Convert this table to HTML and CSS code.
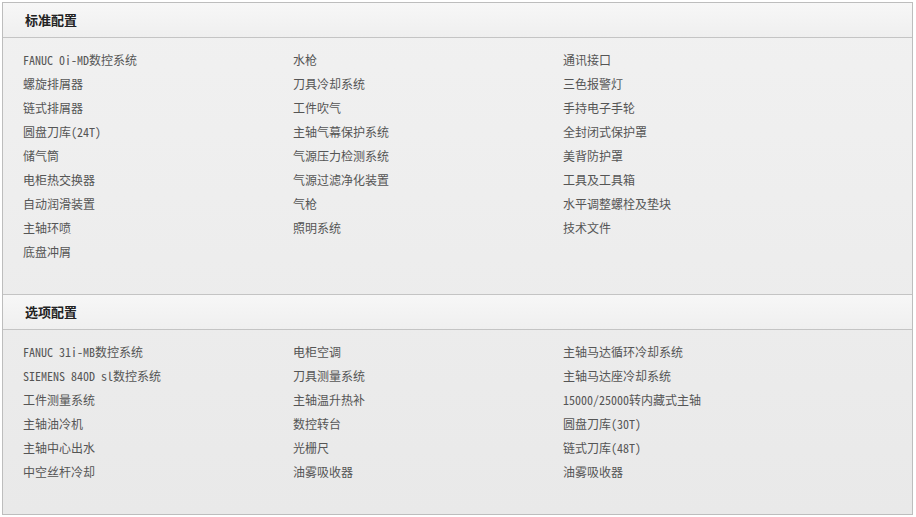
FILE: index.html
```html
<!DOCTYPE html>
<html lang="zh-CN">
<head>
<meta charset="utf-8">
<title>配置</title>
<link rel="stylesheet" href="styles.css">
</head>
<body>
<div class="box">
  <section class="sec">
    <div class="head">标准配置</div>
    <div class="grid">
      <div class="col">
        <div class="item">FANUC 0i-MD数控系统</div>
        <div class="item">螺旋排屑器</div>
        <div class="item">链式排屑器</div>
        <div class="item">圆盘刀库(24T)</div>
        <div class="item">储气筒</div>
        <div class="item">电柜热交换器</div>
        <div class="item">自动润滑装置</div>
        <div class="item">主轴环喷</div>
        <div class="item">底盘冲屑</div>
      </div>
      <div class="col">
        <div class="item">水枪</div>
        <div class="item">刀具冷却系统</div>
        <div class="item">工件吹气</div>
        <div class="item">主轴气幕保护系统</div>
        <div class="item">气源压力检测系统</div>
        <div class="item">气源过滤净化装置</div>
        <div class="item">气枪</div>
        <div class="item">照明系统</div>
      </div>
      <div class="col">
        <div class="item">通讯接口</div>
        <div class="item">三色报警灯</div>
        <div class="item">手持电子手轮</div>
        <div class="item">全封闭式保护罩</div>
        <div class="item">美背防护罩</div>
        <div class="item">工具及工具箱</div>
        <div class="item">水平调整螺栓及垫块</div>
        <div class="item">技术文件</div>
      </div>
    </div>
  </section>
  <section class="sec">
    <div class="head">选项配置</div>
    <div class="grid">
      <div class="col">
        <div class="item">FANUC 31i-MB数控系统</div>
        <div class="item">SIEMENS 840D sl数控系统</div>
        <div class="item">工件测量系统</div>
        <div class="item">主轴油冷机</div>
        <div class="item">主轴中心出水</div>
        <div class="item">中空丝杆冷却</div>
      </div>
      <div class="col">
        <div class="item">电柜空调</div>
        <div class="item">刀具测量系统</div>
        <div class="item">主轴温升热补</div>
        <div class="item">数控转台</div>
        <div class="item">光栅尺</div>
        <div class="item">油雾吸收器</div>
      </div>
      <div class="col">
        <div class="item">主轴马达循环冷却系统</div>
        <div class="item">主轴马达座冷却系统</div>
        <div class="item">15000/25000转内藏式主轴</div>
        <div class="item">圆盘刀库(30T)</div>
        <div class="item">链式刀库(48T)</div>
        <div class="item">油雾吸收器</div>
      </div>
    </div>
  </section>
</div>
</body>
</html>
```

FILE: styles.css
```css
html, body {
  margin: 0;
  padding: 0;
  background: #ffffff;
}
body {
  font-family: "Noto Sans Mono CJK SC", "Noto Sans CJK SC", "Liberation Mono", monospace;
  font-size: 12px;
  color: #555555;
}
.box {
  margin: 2px 0 0 2px;
  width: 909px;
  border: 1px solid #bdbdbd;
  background: linear-gradient(to bottom, #f1f1f1, #e9e9e9);
}
.sec + .sec {
  border-top: 1px solid #c4c4c4;
}
.head {
  height: 34px;
  line-height: 34px;
  padding-left: 22px;
  font-family: "Noto Sans CJK SC", sans-serif;
  font-size: 13px;
  font-weight: bold;
  color: #222222;
  background: linear-gradient(to bottom, #f7f7f7, #efefef);
  border-bottom: 1px solid #c4c4c4;
}
.grid {
  display: grid;
  grid-template-columns: 270px 270px 1fr;
  padding: 10px 0 30px 20px;
}
.item {
  height: 24px;
  line-height: 24px;
  white-space: nowrap;
}
```
